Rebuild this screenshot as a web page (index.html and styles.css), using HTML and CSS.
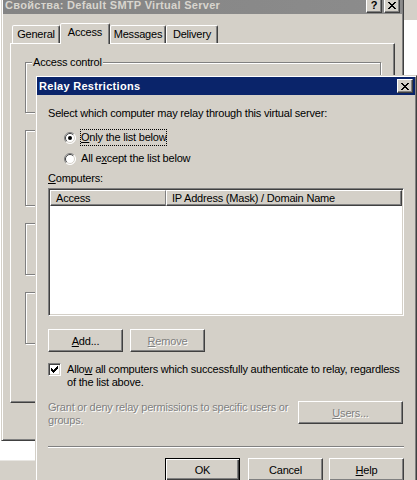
FILE: index.html
```html
<!DOCTYPE html>
<html>
<head>
<meta charset="utf-8">
<title>Relay Restrictions</title>
<link rel="stylesheet" href="styles.css">
</head>
<body>
<div class="desk">
  <div class="toprow">
    <div class="bgwin">
      <div class="bgtitle">
        <span class="bgtitle-text">Свойства: Default SMTP Virtual Server</span>
        <div class="capbtns">
          <span class="capbtn q">?</span>
          <span class="capbtn"><svg width="8" height="7" viewBox="0 0 8 7" shape-rendering="crispEdges"><path fill="#000" d="M0 0h2v1H0zM6 0h2v1H6zM1 1h2v1H1zM5 1h2v1H5zM2 2h4v1H2zM3 3h2v1H3zM2 4h4v1H2zM1 5h2v1H1zM5 5h2v1H5zM0 6h2v1H0zM6 6h2v1H6z"/></svg></span>
        </div>
      </div>
      <div class="tabs">
        <div class="tab t-general">General</div>
        <div class="tab sel t-access">Access</div>
        <div class="tab t-messages">Messages</div>
        <div class="tab t-delivery">Delivery</div>
      </div>
      <div class="panel">
        <div class="grp g1"><span class="grp-label">Access control</span></div>
        <div class="grp g2"></div>
        <div class="grp g3"></div>
        <div class="grp g4"></div>
      </div>
    </div>
    <div class="side"><div class="side-grey"></div></div>
  </div>
  <div class="below-white"></div>
  <div class="below-grey"></div>
</div>

<div class="dialog">
  <div class="dtitle">
    <span class="dtitle-text">Relay Restrictions</span>
    <span class="capbtn dclose"><svg width="8" height="7" viewBox="0 0 8 7" shape-rendering="crispEdges"><path fill="#000" d="M0 0h2v1H0zM6 0h2v1H6zM1 1h2v1H1zM5 1h2v1H5zM2 2h4v1H2zM3 3h2v1H3zM2 4h4v1H2zM1 5h2v1H1zM5 5h2v1H5zM0 6h2v1H0zM6 6h2v1H6z"/></svg></span>
  </div>
  <div class="dbody">
    <div class="prompt">Select which computer may relay through this virtual server:</div>
    <div class="radios">
      <div class="radio-row">
        <svg class="radio" width="12" height="12" viewBox="0 0 12 12">
          <circle cx="6" cy="6" r="5.5" fill="#fff"/>
          <path d="M2.1 9.9 A5.5 5.5 0 0 1 9.9 2.1" stroke="#808080" fill="none"/>
          <path d="M9.9 2.1 A5.5 5.5 0 0 1 2.1 9.9" stroke="#fff" fill="none"/>
          <path d="M2.8 9.2 A4.5 4.5 0 0 1 9.2 2.8" stroke="#404040" fill="none"/>
          <path d="M9.2 2.8 A4.5 4.5 0 0 1 2.8 9.2" stroke="#d4d0c8" fill="none"/>
          <circle cx="6" cy="6" r="2" fill="#000"/>
        </svg>
        <span class="rlabel focus"><u>O</u>nly the list below</span>
      </div>
      <div class="radio-row">
        <svg class="radio" width="12" height="12" viewBox="0 0 12 12">
          <circle cx="6" cy="6" r="5.5" fill="#fff"/>
          <path d="M2.1 9.9 A5.5 5.5 0 0 1 9.9 2.1" stroke="#808080" fill="none"/>
          <path d="M9.9 2.1 A5.5 5.5 0 0 1 2.1 9.9" stroke="#fff" fill="none"/>
          <path d="M2.8 9.2 A4.5 4.5 0 0 1 9.2 2.8" stroke="#404040" fill="none"/>
          <path d="M9.2 2.8 A4.5 4.5 0 0 1 2.8 9.2" stroke="#d4d0c8" fill="none"/>
        </svg>
        <span class="rlabel">All e<u>x</u>cept the list below</span>
      </div>
    </div>
    <div class="computers"><u>C</u>omputers:</div>
    <div class="listbox">
      <div class="lhead">
        <div class="lcol c1">Access</div>
        <div class="lcol c2">IP Address (Mask) / Domain Name</div>
      </div>
    </div>
    <div class="btnrow">
      <button class="btn"><u>A</u>dd...</button>
      <button class="btn disabled"><u>R</u>emove</button>
    </div>
    <div class="checkrow">
      <span class="checkbox"><svg width="7" height="7" viewBox="0 0 7 7" shape-rendering="crispEdges"><path fill="#000" d="M6 0h1v1H6zM5 1h2v1H5zM0 2h1v1H0zM4 2h3v1H4zM0 3h2v1H0zM3 3h3v1H3zM0 4h5v1H0zM1 5h3v1H1zM2 6h1v1H2z"/></svg></span>
      <span class="checklabel">Allo<u>w</u> all computers which successfully authenticate to relay, regardless<br>of the list above.</span>
    </div>
    <div class="grantrow">
      <span class="granttext">Grant or deny relay permissions to specific users or<br>groups.</span>
      <button class="btn disabled users"><u>U</u>sers...</button>
    </div>
    <div class="sep"></div>
    <div class="footer">
      <button class="btn default">OK</button>
      <button class="btn cancel">Cancel</button>
      <button class="btn"><u>H</u>elp</button>
    </div>
  </div>
</div>
</body>
</html>
```

FILE: styles.css
```css
html, body {
  margin: 0;
  padding: 0;
}
body {
  width: 417px;
  height: 480px;
  overflow: hidden;
  position: relative;
  background: #fff;
  font-family: "Liberation Sans", Arial, sans-serif;
  font-size: 11px;
  line-height: 13px;
  letter-spacing: -0.2px;
  color: #000;
  white-space: nowrap;
}

/* ---------- background window ---------- */
.desk {
  display: flex;
  flex-direction: column;
}
.toprow {
  display: flex;
}
.bgwin {
  margin: -5px 0 0 1px;
  width: 403px;
  height: 446px;
  box-sizing: border-box;
  background: #d4d0c8;
  border: 1px solid;
  border-color: #d4d0c8 #404040 #404040 #d4d0c8;
  box-shadow: inset 1px 1px 0 #fff, inset -1px -1px 0 #808080;
  padding: 1px;
  display: flex;
  flex-direction: column;
  flex: none;
}
.bgtitle {
  height: 17px;
  background: linear-gradient(90deg, #848484, #8c8c8c);
  display: flex;
  align-items: center;
  justify-content: space-between;
  padding: 0 2px 0 2px;
}
.bgtitle-text {
  color: #d8d5ce;
  font-weight: bold;
  font-size: 11px;
  letter-spacing: 0.3px;
}
.capbtns {
  display: flex;
  gap: 2px;
}
.capbtn {
  width: 16px;
  height: 14px;
  box-sizing: border-box;
  background: #d4d0c8;
  border: 1px solid;
  border-color: #fff #404040 #404040 #fff;
  box-shadow: inset -1px -1px 0 #808080;
  display: flex;
  align-items: center;
  justify-content: center;
}
.capbtn.q {
  font-weight: bold;
  font-size: 11px;
  line-height: 11px;
}

.tabs {
  display: flex;
  align-items: flex-end;
  height: 20px;
  margin: 9px 0 0 7px;
  position: relative;
  z-index: 1;
}
.tab {
  height: 18px;
  box-sizing: border-box;
  border: 1px solid;
  border-bottom: none;
  border-color: #fff #404040 transparent #fff;
  box-shadow: inset -1px 0 0 #808080;
  border-radius: 2px 2px 0 0;
  background: #d4d0c8;
  display: flex;
  align-items: center;
  justify-content: center;
  padding-bottom: 1px;
}
.t-general { width: 48px; margin-left: 2px; }
.t-access { width: 50px; }
.t-messages { width: 56px; }
.t-delivery { width: 52px; }
.tab.sel {
  height: 21px;
  margin-bottom: -1px;
  padding-bottom: 3px;
}

.panel {
  margin: 0 7px;
  height: 360px;
  box-sizing: border-box;
  border: 1px solid;
  border-color: #fff #404040 #404040 #fff;
  box-shadow: inset -1px -1px 0 #808080;
  padding: 18px 13px 0 14px;
  display: flex;
  flex-direction: column;
  gap: 17px;
}
.grp {
  position: relative;
  box-sizing: border-box;
  border: 1px solid #808080;
  box-shadow: inset 1px 1px 0 #fff, 1px 1px 0 #fff;
  flex: none;
}
.g1 { height: 51px; }
.g2 { height: 76px; }
.g3 { height: 52px; }
.g4 { height: 52px; }
.grp-label {
  position: absolute;
  left: 6px;
  top: -7px;
  padding: 0 1px;
  background: #d4d0c8;
}

.side {
  flex: 1;
}
.side-grey {
  height: 20px;
  background: #d4d0c8;
}
.below-white {
  height: 19px;
  background: #fff;
}
.below-grey {
  height: 40px;
  background: #d4d0c8;
  border-top: 1px solid #e8e6e2;
}

/* ---------- dialog ---------- */
.dialog {
  position: absolute;
  left: 35px;
  top: 75px;
  width: 382px;
  height: 430px;
  box-sizing: border-box;
  background: #d4d0c8;
  border: 1px solid;
  border-color: #d4d0c8 #404040 #404040 #d4d0c8;
  box-shadow: inset 1px 1px 0 #fff, inset -1px -1px 0 #808080;
  padding: 1px;
}
.dtitle {
  height: 18px;
  background: #0a246a;
  display: flex;
  align-items: center;
  justify-content: space-between;
  padding: 0 2px 0 2px;
}
.dtitle-text {
  color: #fff;
  font-weight: bold;
  letter-spacing: 0.3px;
}
.dbody {
  padding: 0 11px;
}
.prompt {
  margin-top: 12px;
}
.radios {
  margin-top: 7px;
}
.radio-row {
  height: 21px;
  display: flex;
  align-items: center;
  padding-left: 16px;
}
.radio {
  display: block;
  flex: none;
}
.rlabel {
  margin-left: 5px;
  padding: 1px 0;
}
.rlabel.focus {
  outline: 1px dotted #000;
}
.computers {
  margin-top: 3px;
}
.listbox {
  margin-top: 3px;
  height: 128px;
  box-sizing: border-box;
  background: #fff;
  border: 1px solid;
  border-color: #808080 #fff #fff #808080;
  box-shadow: inset 1px 1px 0 #404040, inset -1px -1px 0 #d4d0c8;
  padding: 1px;
}
.lhead {
  display: flex;
  height: 16px;
}
.lcol {
  box-sizing: border-box;
  height: 16px;
  background: #d4d0c8;
  border: 1px solid;
  border-color: #fff #404040 #404040 #fff;
  box-shadow: inset -1px -1px 0 #808080;
  padding-left: 5px;
  display: flex;
  align-items: center;
}
.c1 { width: 116px; border-right-color: #808080; box-shadow: inset 0 -1px 0 #808080; }
.c2 { flex: 1; }

.btn {
  width: 75px;
  height: 23px;
  box-sizing: border-box;
  margin: 0;
  padding: 0;
  background: #d4d0c8;
  border: 1px solid;
  border-color: #fff #404040 #404040 #fff;
  box-shadow: inset -1px -1px 0 #808080;
  font-family: inherit;
  font-size: 11px;
  letter-spacing: -0.2px;
  color: #000;
  border-radius: 0;
  flex: none;
}
.btn.disabled {
  color: #808080;
  text-shadow: 1px 1px 0 #fff;
}
.btn.default {
  border: 1px solid #000;
  box-shadow: inset 1px 1px 0 #fff, inset -1px -1px 0 #404040, inset -2px -2px 0 #808080;
}
.btnrow {
  margin-top: 13px;
  display: flex;
  gap: 7px;
}
.checkrow {
  margin-top: 11px;
  display: flex;
  align-items: flex-start;
}
.checkbox {
  width: 13px;
  height: 13px;
  box-sizing: border-box;
  flex: none;
  background: #fff;
  border: 1px solid;
  border-color: #808080 #fff #fff #808080;
  box-shadow: inset 1px 1px 0 #404040, inset -1px -1px 0 #d4d0c8;
  display: flex;
  align-items: center;
  justify-content: center;
}
.checklabel {
  margin-left: 6px;
}
.grantrow {
  margin-top: 12px;
  display: flex;
  justify-content: space-between;
  align-items: flex-start;
}
.granttext {
  color: #808080;
  text-shadow: 1px 1px 0 #fff;
}
.btn.users {
  width: 105px;
  margin-right: 1px;
}
.sep {
  margin-top: 19px;
  border-top: 1px solid #808080;
  border-bottom: 1px solid #fff;
}
.footer {
  margin-top: 10px;
  display: flex;
  justify-content: flex-end;
}
.footer .default { margin-right: 8px; }
.footer .cancel { margin-right: 6px; }
```
